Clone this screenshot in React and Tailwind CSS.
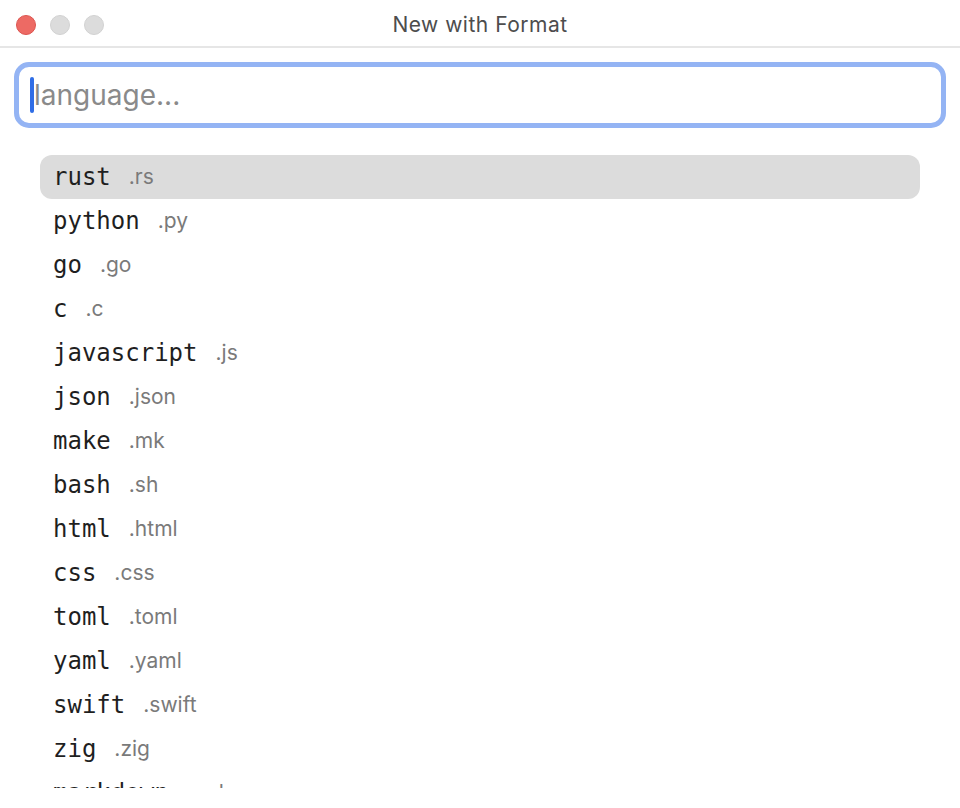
import React from 'react';

// Formats offered in the picker, in display order
const formats = [
  { name: 'rust', ext: '.rs' },
  { name: 'python', ext: '.py' },
  { name: 'go', ext: '.go' },
  { name: 'c', ext: '.c' },
  { name: 'javascript', ext: '.js' },
  { name: 'json', ext: '.json' },
  { name: 'make', ext: '.mk' },
  { name: 'bash', ext: '.sh' },
  { name: 'html', ext: '.html' },
  { name: 'css', ext: '.css' },
  { name: 'toml', ext: '.toml' },
  { name: 'yaml', ext: '.yaml' },
  { name: 'swift', ext: '.swift' },
  { name: 'zig', ext: '.zig' },
  { name: 'markdown', ext: '.md' },
];

function TitleBar() {
  return (
    <div className="relative h-[48px] flex items-center border-b-2 border-[#e6e6e6] bg-white">
      <div className="flex items-center gap-[14px] pl-[16px] pt-[4px]">
        <span className="w-[20px] h-[20px] rounded-full bg-[#ed6a64] border border-[#dd5550]" />
        <span className="w-[20px] h-[20px] rounded-full bg-[#dcdcdc] border border-[#d2d2d2]" />
        <span className="w-[20px] h-[20px] rounded-full bg-[#dcdcdc] border border-[#d2d2d2]" />
      </div>
      <div className="absolute inset-0 flex items-center justify-center pt-[3px] pointer-events-none">
        <span className="text-[21px] text-[#4d4d4d] font-['Inter','Liberation_Sans',sans-serif] tracking-[0.5px]">
          New with Format
        </span>
      </div>
    </div>
  );
}

function SearchBox() {
  return (
    <div className="px-[14px] pt-[14px]">
      <div className="h-[66px] rounded-[15px] border-[5px] border-[#94b4f4] bg-white flex items-center pl-[11px]">
        <span className="w-[4px] h-[36px] rounded-full bg-[#2f6de6]" />
        <span className="text-[28px] leading-none text-[#8a8a8a] font-['Inter','Liberation_Sans',sans-serif] pb-[1px]">
          language...
        </span>
      </div>
    </div>
  );
}

export default function App() {
  return (
    <div className="w-[960px] h-[808px] bg-white overflow-hidden flex flex-col">
      <TitleBar />
      <SearchBox />
      <div className="flex-1 min-h-0 overflow-hidden px-[40px] pt-[27px] pb-[20px]">
        <div className="h-full overflow-hidden">
          {formats.map((f, i) => (
            <div
              key={f.name}
              className={`h-[44px] flex items-center pl-[13px] rounded-[12px] ${i === 0 ? 'bg-[#dcdcdc]' : ''}`}
            >
              <span className="text-[24px] text-[#1f1f1f] font-['DejaVu_Sans_Mono',monospace]">{f.name}</span>
              <span className="ml-[18px] text-[21px] text-[#7a7a7a] font-['Inter','Liberation_Sans',sans-serif]">
                {f.ext}
              </span>
            </div>
          ))}
        </div>
      </div>
    </div>
  );
}
